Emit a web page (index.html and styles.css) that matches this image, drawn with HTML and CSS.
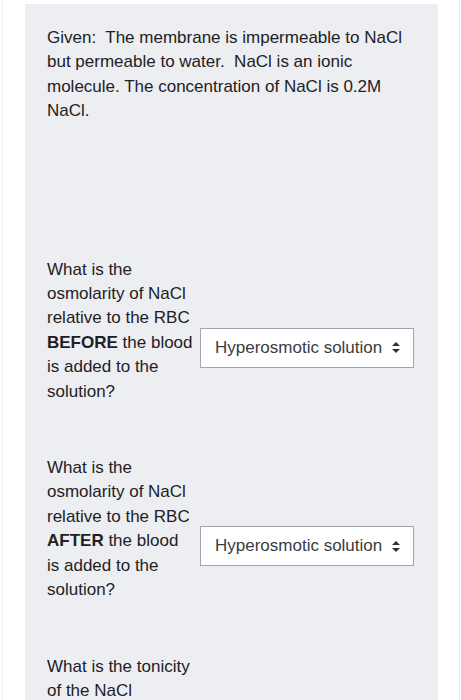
FILE: index.html
```html
<!DOCTYPE html>
<html lang="en">
<head>
    <meta charset="UTF-8">
    <meta name="viewport" content="width=device-width, initial-scale=1.0">
    <title>Question</title>
    <link rel="stylesheet" href="styles.css">
</head>
<body>
    <div class="frame">
        <div class="qtext">
            <p class="given">Given:&nbsp; The membrane is impermeable to NaCl but permeable to water.&nbsp; NaCl is an ionic molecule. The concentration of NaCl is 0.2M NaCl.</p>

            <!-- sub questions -->
            <div class="row">
                <div class="label">What is the osmolarity of NaCl relative to the RBC <b>BEFORE</b> the blood is added to the solution?</div>
                <div class="select">
                    <span>Hyperosmotic solution</span>
                    <svg width="8" height="11" viewBox="0 0 8 11"><path d="M4 0 L8 4 L0 4 Z M0 7 L8 7 L4 11 Z" fill="#333"/></svg>
                </div>
            </div>

            <div class="row">
                <div class="label">What is the osmolarity of NaCl relative to the RBC <b>AFTER</b> the blood is added to the solution?</div>
                <div class="select">
                    <span>Hyperosmotic solution</span>
                    <svg width="8" height="11" viewBox="0 0 8 11"><path d="M4 0 L8 4 L0 4 Z M0 7 L8 7 L4 11 Z" fill="#333"/></svg>
                </div>
            </div>

            <div class="row">
                <div class="label">What is the tonicity of the NaCl solution relative to the RBC?</div>
                <div class="select">
                    <span>Hypertonic solution</span>
                    <svg width="8" height="11" viewBox="0 0 8 11"><path d="M4 0 L8 4 L0 4 Z M0 7 L8 7 L4 11 Z" fill="#333"/></svg>
                </div>
            </div>
        </div>
    </div>
</body>
</html>
```

FILE: styles.css
```css
body {
    margin: 0;
    padding: 0;
    background: #fff;
    font-family: "Liberation Sans", Arial, sans-serif;
    color: #1d2125;
}

.frame {
    margin: 0 1px 0 2px;
    padding: 4px 21px 0 22px;
    border-left: 1px solid #f0f0f2;
    border-right: 1px solid #ececef;
    min-height: 700px;
}

.qtext {
    background: #edeef2;
    padding: 22px 0 40px 22px;
    font-size: 17px;
    line-height: 24.4px;
}

.given {
    margin: 0 0 134px 0;
    max-width: 356px;
}

.row {
    display: flex;
    align-items: center;
    margin-bottom: 18px;
}

.label {
    width: 148px;
    padding-bottom: 34px;
}

.select {
    display: flex;
    align-items: center;
    justify-content: space-between;
    box-sizing: border-box;
    width: 214px;
    height: 40px;
    margin-left: 5px;
    padding: 0 13px 0 14px;
    background: #fff;
    border: 1px solid #a5a5a8;
    color: #3a3c3f;
    font-size: 17px;
}
```
